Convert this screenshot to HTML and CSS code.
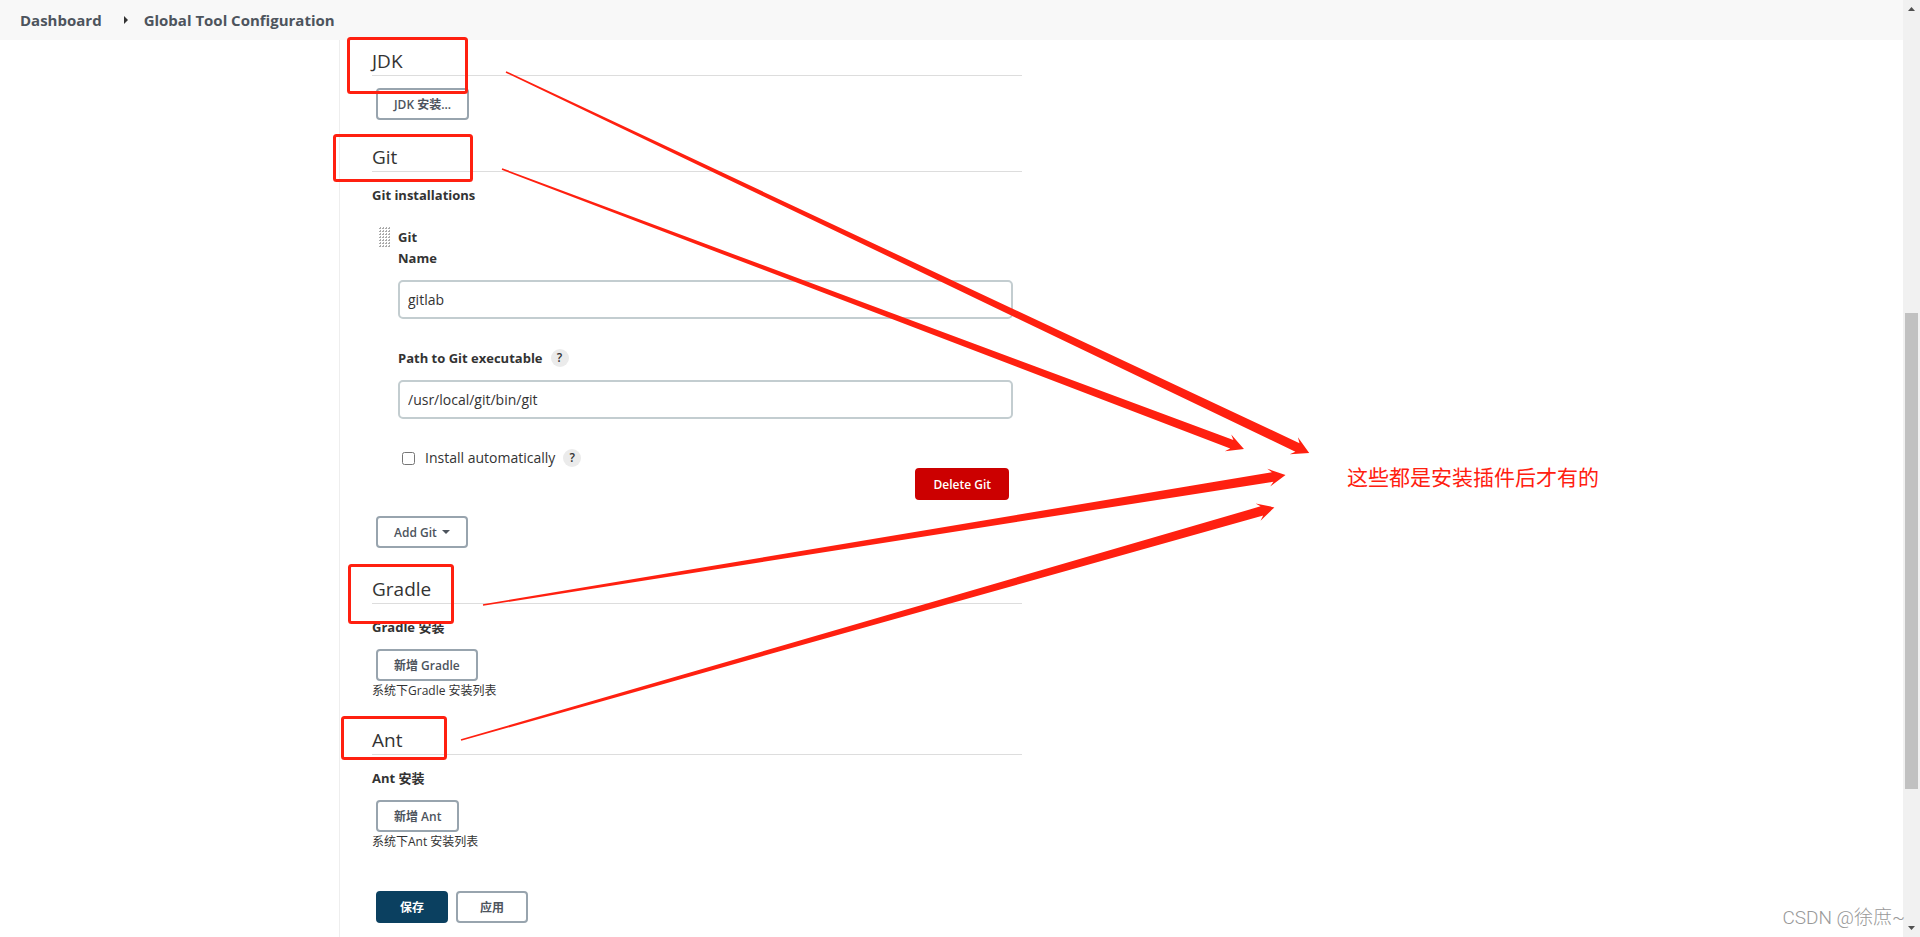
FILE: index.html
```
<!DOCTYPE html>
<html lang="zh-CN">
<head>
  <meta charset="UTF-8" />
  <title>Global Tool Configuration</title>
  <link rel="stylesheet" href="styles.css">
</head>
<body>

  <div class="page">
    <nav class="breadcrumbs">
      <a href="#">Dashboard</a>
      <svg class="separator" width="5" height="8" viewBox="0 0 5 8"><path d="M0 0L4 4L0 8Z" fill="#333"/></svg>
      <a href="#">Global Tool Configuration</a>
    </nav>

    <main class="main-panel">
      <form class="config">

        <section class="section section-jdk">
          <h2>JDK</h2>
          <div class="button-row">
            <button type="button" class="btn">JDK 安装...</button>
          </div>
        </section>

        <section class="section">
          <h2>Git</h2>
          <div class="setting-name">Git installations</div>
          <div class="repeated">
            <svg class="handle" width="12" height="21">
              <defs>
                <pattern id="dots" width="3" height="3" patternUnits="userSpaceOnUse">
                  <path d="M0 1.500h2M1.500 0v2" stroke="#aaa" stroke-width="1"/>
                </pattern>
              </defs>
              <rect width="12" height="21" fill="url(#dots)"/>
            </svg>
            <div class="item">
              <div class="label item-title">Git</div>
              <label class="label" for="git-name">Name</label>
              <input type="text" id="git-name" value="gitlab">
              <div class="label-row">
                <label class="label" for="git-path">Path to Git executable</label>
                <button type="button" class="help">?</button>
              </div>
              <input type="text" id="git-path" value="/usr/local/git/bin/git">
              <div class="check-row">
                <input type="checkbox" id="git-auto">
                <label for="git-auto">Install automatically</label>
                <button type="button" class="help">?</button>
              </div>
              <div class="delete-row">
                <button type="button" class="btn btn-danger">Delete Git</button>
              </div>
            </div>
          </div>
          <div class="button-row">
            <button type="button" class="btn">Add Git <span class="caret"></span></button>
          </div>
        </section>

        <section class="section">
          <h2>Gradle</h2>
          <div class="setting-name">Gradle 安装</div>
          <div class="button-row">
            <button type="button" class="btn">新增 Gradle</button>
          </div>
          <div class="description">系统下Gradle 安装列表</div>
        </section>

        <section class="section">
          <h2>Ant</h2>
          <div class="setting-name">Ant 安装</div>
          <div class="button-row">
            <button type="button" class="btn">新增 Ant</button>
          </div>
          <div class="description">系统下Ant 安装列表</div>
        </section>

        <div class="bottom-bar">
          <button type="button" class="btn btn-wide btn-primary">保存</button>
          <button type="button" class="btn btn-wide">应用</button>
        </div>

      </form>
    </main>
  </div>

  <div class="scrollbar">
    <svg width="7" height="4" viewBox="0 0 7 4"><path d="M0 4L3.5 0L7 4Z" fill="#505050"/></svg>
    <div class="track">
      <div class="thumb"></div>
    </div>
    <svg width="7" height="4" viewBox="0 0 7 4"><path d="M0 0L3.5 4L7 0Z" fill="#505050"/></svg>
  </div>

  <!-- hand-drawn marks over the form -->
  <svg class="marks" width="1320" height="780">
    <g fill="none" stroke="#ff2010" stroke-width="3">
      <rect x="348.500" y="38.500" width="118" height="54" rx="2"/>
      <rect x="334.500" y="135.500" width="137" height="45" rx="2"/>
      <rect x="349.500" y="565.500" width="103" height="57" rx="2"/>
      <rect x="342.500" y="717.500" width="103" height="41" rx="2"/>
    </g>
    <g fill="#ff2010">
      <path transform="translate(506 72) rotate(25.380)" d="M0 -.8L876 -4.800L872 -9.500L889 0L872 9.500L876 4.800L0 .8Z"/>
      <path transform="translate(502 169) rotate(20.670)" d="M0 -.8L780 -4.500L776 -9L793 0L776 9L780 4.500L0 .8Z"/>
      <path transform="translate(483 605) rotate(-9.210)" d="M0 -.8L800 -4.800L796 -9L813 0L796 9L800 4.800L0 .8Z"/>
      <path transform="translate(461 740) rotate(-15.960)" d="M0 -.8L833 -4.800L829 -9L846 0L829 9L833 4.800L0 .8Z"/>
    </g>
  </svg>
  <div class="note">这些都是安装插件后才有的</div>
  <div class="watermark">CSDN @徐庶~</div>

</body>
</html>
```
FILE: styles.css
```
* {
  box-sizing: border-box;
}
body {
  margin: 0;
  display: flex;
  min-height: 100vh;
  position: relative;
  background: #fff;
  color: #333;
  font-family: "Open Sans", "Noto Sans CJK SC", sans-serif;
  font-size: 13px;
  line-height: 20px;
}
button, input {
  font-family: inherit;
  margin: 0;
}
.page {
  flex: 1;
  display: flex;
  flex-direction: column;
}
.breadcrumbs {
  display: flex;
  align-items: center;
  height: 40px;
  padding: 0 20px;
  background: #f8f8f8;
}
.breadcrumbs a {
  color: #4d545d;
  font-size: 15px;
  font-weight: 700;
  text-decoration: none;
}
.separator {
  margin: 0 15px 0 22px;
}
.main-panel {
  flex: 1;
  margin-left: 339px;
  padding: 7px 32px 0;
  border-left: 1px solid #eee;
}
.config {
  max-width: 650px;
}
.section {
  margin-bottom: 27px;
}
.section-jdk {
  margin-bottom: 23px;
}
h2 {
  margin: 0 0 12px;
  border-bottom: 1px solid #ddd;
  font-size: 19px;
  font-weight: 500;
  line-height: 28px;
}
.setting-name {
  margin-bottom: 12px;
  padding-top: 1px;
  font-weight: 700;
}
.button-row {
  display: flex;
  padding-left: 4px;
}
.btn {
  display: flex;
  align-items: center;
  height: 32px;
  padding: 0 16px;
  border: 2px solid #98a4ae;
  border-radius: 4px;
  background: #fff;
  color: #4d545d;
  font-size: 12px;
  font-weight: 600;
}
.btn-danger {
  border-color: #c00;
  background: #c00;
  color: #fff;
}
.btn-wide {
  padding: 0 22px;
}
.btn-primary {
  border-color: #0b4060;
  background: #0b4060;
  color: #fff;
}
.caret {
  margin-left: 5px;
  border: 4px solid transparent;
  border-top-color: #4d545d;
  border-bottom: 0;
}
.repeated {
  display: flex;
  padding: 10px 9px 16px 7px;
}
.handle {
  margin-right: 7px;
}
.item {
  flex: 1;
}
.label {
  display: block;
  font-weight: 700;
}
.item-title {
  margin-bottom: 1px;
}
input[type="text"] {
  display: block;
  width: 100%;
  height: 39px;
  margin: 12px 0 29px;
  padding: 0 8px;
  border: 2px solid #c3cdd0;
  border-radius: 5px;
  color: #333;
  font-size: 14px;
}
.label-row, .check-row {
  display: flex;
  align-items: center;
  height: 20px;
}
.check-row {
  padding-left: 4px;
  font-size: 14px;
}
.check-row label {
  margin-left: 10px;
}
input[type="checkbox"] {
  width: 13px;
  height: 13px;
}
.help {
  width: 18px;
  height: 18px;
  margin-left: 8px;
  padding: 0;
  border: 0;
  border-radius: 50%;
  background: #ebebeb;
  color: #333;
  font-size: 12px;
  font-weight: 600;
  line-height: 18px;
}
.delete-row {
  display: flex;
  justify-content: flex-end;
  padding-right: 4px;
}
.description {
  padding-top: 1px;
  font-size: 12px;
  line-height: 17px;
}
.bottom-bar {
  display: flex;
  gap: 8px;
  padding: 14px 4px;
}
.scrollbar {
  display: flex;
  flex-direction: column;
  align-items: center;
  width: 17px;
  padding: 7px 0;
  background: #f1f1f1;
}
.track {
  flex: 1;
  display: flex;
  flex-direction: column;
}
.track::before {
  content: "";
  flex: 302;
}
.track::after {
  content: "";
  flex: 137;
}
.thumb {
  flex: 476;
  width: 13px;
  background: #c1c1c1;
}
.marks {
  position: absolute;
  top: 0;
  left: 0;
  pointer-events: none;
}
.note {
  position: absolute;
  top: 461px;
  left: 1347px;
  color: #ff2010;
  font-size: 21px;
  line-height: 32px;
}
.watermark {
  position: absolute;
  right: 15px;
  bottom: 4px;
  color: #999;
  font-family: Roboto, "Noto Sans CJK SC", sans-serif;
  font-size: 19px;
  font-weight: 300;
  line-height: 30px;
}
```
